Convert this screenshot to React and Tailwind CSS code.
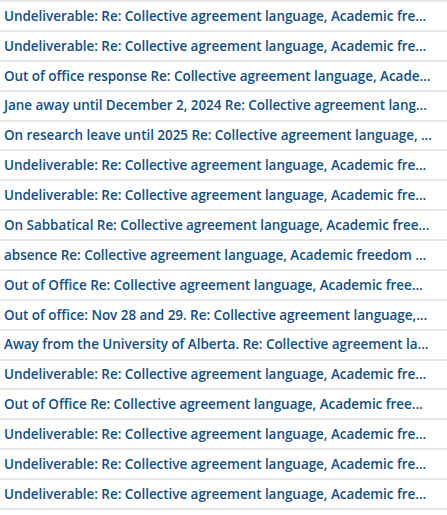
const subjects = [
  "Undeliverable: Re: Collective agreement language, Academic fre...",
  "Undeliverable: Re: Collective agreement language, Academic fre...",
  "Out of office response Re: Collective agreement language, Acade...",
  "Jane away until December 2, 2024 Re: Collective agreement lang...",
  "On research leave until 2025 Re: Collective agreement language, ...",
  "Undeliverable: Re: Collective agreement language, Academic fre...",
  "Undeliverable: Re: Collective agreement language, Academic fre...",
  "On Sabbatical Re: Collective agreement language, Academic free...",
  "absence Re: Collective agreement language, Academic freedom ...",
  "Out of Office Re: Collective agreement language, Academic free...",
  "Out of office: Nov 28 and 29. Re: Collective agreement language,...",
  "Away from the University of Alberta. Re: Collective agreement la...",
  "Undeliverable: Re: Collective agreement language, Academic fre...",
  "Out of Office Re: Collective agreement language, Academic free...",
  "Undeliverable: Re: Collective agreement language, Academic fre...",
  "Undeliverable: Re: Collective agreement language, Academic fre...",
  "Undeliverable: Re: Collective agreement language, Academic fre...",
];

export default function App() {
  return (
    <div className="w-[447px] h-[515px] bg-white overflow-hidden">
      <ul className="border-b-2 border-[#e8e8e8]">
        {subjects.map((s, i) => (
          <li
            key={i}
            className="h-[29.88px] border-t-2 border-[#e8e8e8] flex items-center pl-[4px] overflow-hidden"
          >
            <span
              className="whitespace-nowrap text-[13.5px] tracking-[-0.05px] font-semibold text-[#0f4f8c]"
              style={{ fontFamily: "'Open Sans', 'Noto Sans', sans-serif" }}
            >
              {s}
            </span>
          </li>
        ))}
      </ul>
    </div>
  );
}
